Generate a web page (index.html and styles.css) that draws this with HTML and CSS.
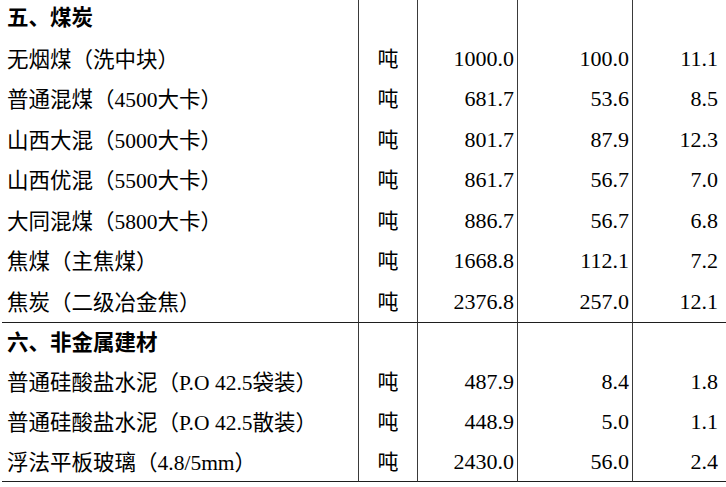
FILE: index.html
```html
<!DOCTYPE html>
<html lang="zh-CN">
<head>
<meta charset="utf-8">
<title>价格表</title>
<link rel="stylesheet" href="styles.css">
</head>
<body>
<table class="price-table">
  <colgroup>
    <col class="c-name">
    <col class="c-unit">
    <col class="c-num1">
    <col class="c-num2">
    <col class="c-num3">
  </colgroup>
  <tbody class="sec sec-coal">
    <tr class="head"><td class="name">五、煤炭</td><td class="unit"></td><td class="num"></td><td class="num"></td><td class="num last"></td></tr>
    <tr><td class="name">无烟煤<span class="pn">（</span>洗中块<span class="pn">）</span></td><td class="unit">吨</td><td class="num">1000.0</td><td class="num">100.0</td><td class="num last">11.1</td></tr>
    <tr><td class="name">普通混煤<span class="pn">（</span>4500大卡<span class="pn">）</span></td><td class="unit">吨</td><td class="num">681.7</td><td class="num">53.6</td><td class="num last">8.5</td></tr>
    <tr><td class="name">山西大混<span class="pn">（</span>5000大卡<span class="pn">）</span></td><td class="unit">吨</td><td class="num">801.7</td><td class="num">87.9</td><td class="num last">12.3</td></tr>
    <tr><td class="name">山西优混<span class="pn">（</span>5500大卡<span class="pn">）</span></td><td class="unit">吨</td><td class="num">861.7</td><td class="num">56.7</td><td class="num last">7.0</td></tr>
    <tr><td class="name">大同混煤<span class="pn">（</span>5800大卡<span class="pn">）</span></td><td class="unit">吨</td><td class="num">886.7</td><td class="num">56.7</td><td class="num last">6.8</td></tr>
    <tr><td class="name">焦煤<span class="pn">（</span>主焦煤<span class="pn">）</span></td><td class="unit">吨</td><td class="num">1668.8</td><td class="num">112.1</td><td class="num last">7.2</td></tr>
    <tr><td class="name">焦炭<span class="pn">（</span>二级冶金焦<span class="pn">）</span></td><td class="unit">吨</td><td class="num">2376.8</td><td class="num">257.0</td><td class="num last">12.1</td></tr>
  </tbody>
  <tbody class="sec sec-build">
    <tr class="head"><td class="name">六、非金属建材</td><td class="unit"></td><td class="num"></td><td class="num"></td><td class="num last"></td></tr>
    <tr><td class="name">普通硅酸盐水泥<span class="pn">（</span>P.O 42.5袋装<span class="pn">）</span></td><td class="unit">吨</td><td class="num">487.9</td><td class="num">8.4</td><td class="num last">1.8</td></tr>
    <tr><td class="name">普通硅酸盐水泥<span class="pn">（</span>P.O 42.5散装<span class="pn">）</span></td><td class="unit">吨</td><td class="num">448.9</td><td class="num">5.0</td><td class="num last">1.1</td></tr>
    <tr class="end"><td class="name">浮法平板玻璃<span class="pn">（</span>4.8/5mm<span class="pn">）</span></td><td class="unit">吨</td><td class="num">2430.0</td><td class="num">56.0</td><td class="num last">2.4</td></tr>
  </tbody>
</table>
</body>
</html>
```

FILE: styles.css
```css
html, body {
  margin: 0;
  padding: 0;
  background: #ffffff;
  overflow: hidden;
}

body {
  padding-left: 2px;
  margin-top: -2px;
  font-family: "Liberation Serif", "Noto Sans CJK SC", serif;
  font-size: 21px;
  color: #000000;
}

.price-table {
  border-collapse: separate;
  border-spacing: 0;
  table-layout: fixed;
  width: 724px;
}

.c-name { width: 356px; }
.c-unit { width: 59px; }
.c-num1 { width: 100px; }
.c-num2 { width: 115px; }
.c-num3 { width: 94px; }

.price-table td {
  box-sizing: border-box;
  padding: 0;
  line-height: 24px;
  vertical-align: middle;
  white-space: nowrap;
  overflow: hidden;
}

.sec-coal td { height: 40.5px; }
.sec-build td { height: 40px; }

.price-table td.name {
  padding-left: 5px;
  text-align: left;
  font-size: 21.5px;
}

.pn {
  font-family: "Noto Sans CJK TC", "Noto Sans CJK SC", sans-serif;
}

.price-table td.unit {
  text-align: center;
  border-left: 1px solid #3a3a3a;
}

.price-table td.num {
  text-align: right;
  padding-right: 3px;
  font-size: 22px;
  border-left: 1px solid #3a3a3a;
}

.price-table td.num.last {
  padding-right: 8px;
}

.head td.name {
  font-weight: bold;
}

.sec-build .head td {
  border-top: 1px solid #1e1e1e;
}

.sec-build .end td {
  border-bottom: 1px solid #1e1e1e;
}
```
